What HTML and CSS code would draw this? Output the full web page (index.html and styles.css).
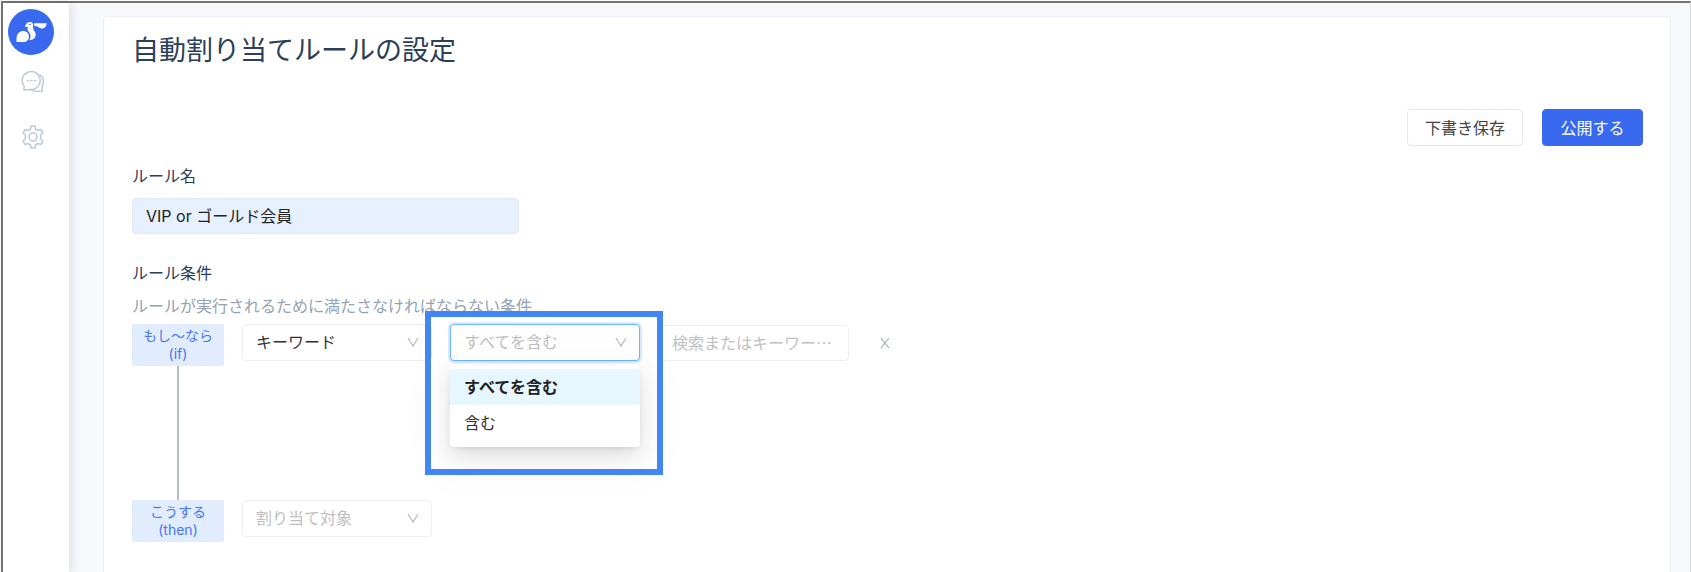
FILE: index.html
```html
<!DOCTYPE html>
<html lang="ja">
<head>
<meta charset="utf-8">
<title>自動割り当てルールの設定</title>
<link rel="stylesheet" href="styles.css">
</head>
<body>
<div class="app">
  <nav class="sidebar">
    <a class="logo" href="#" aria-label="ホーム">
      <svg viewBox="0 0 46 46"><circle cx="23" cy="23" r="23" fill="#3969ef"/><path d="M8.500 33V29.500c0-4.500 3-7.500 6.500-7.500s6 2.500 6 5.500c0 3.500-2.500 5.500-6 5.500Z" fill="#fff"/><path d="M17 18c.5-3.500 2.500-5 5-5s3.500 1.800 3.200 4c-.4 3 .3 4 1.500 5.500 1.500 2 1.300 4.500 0 6.300-1.200 1.700-3 2.300-5.200 2.200 1.500-2.500 1.500-5.500-.3-7.500-1.400-1.500-2.200-3-1.200-5.500Z" fill="#fff"/><path d="M26 14.200h12.700c-.2 3-2.200 5.500-5.200 5.300-2.500-.3-3.500-2.500-7.500-3Z" fill="#fff"/><circle cx="22" cy="15.500" r=".8" fill="#3969ef"/></svg>
    </a>
    <div class="nav-links">
      <a class="nav-link" href="#" aria-label="チャット">
        <svg viewBox="0 0 24 24"><path d="M3 20v-4a9 9 0 1 1 6 3.500L3 20Z"/><path d="M19 4.800c2.200 1.500 3.500 3.700 3.500 6.700 0 2-.5 4-1.500 5.500v4.500l-4.500-.3c-2.500.3-4.500 0-6-1.500"/><path d="M6.300 10.500h1.200M9.900 10.500h1.200M13.500 10.500h1.200"/></svg>
      </a>
      <a class="nav-link" href="#" aria-label="設定">
        <svg viewBox="0 0 24 24"><circle cx="12" cy="12" r="4"/><path d="M9.500 4 10 1h4l.5 3 2.500 1.500 3-1 2 3.500-2.300 2v4l2.300 2-2 3.500-3-1-2.500 1.500-.5 3h-4l-.5-3L7 18.500l-3 1L2 16l2.300-2v-4L2 8l2-3.500 3 1Z"/></svg>
      </a>
    </div>
  </nav>
  <main class="content">
    <form class="card">
      <h1 class="title">自動割り当てルールの設定</h1>
      <div class="actions">
        <button class="btn" type="button">下書き保存</button>
        <button class="btn btn-primary" type="button">公開する</button>
      </div>
      <label class="label" for="rule-name">ルール名</label>
      <input class="name-input" id="rule-name" type="text" value="VIP or ゴールド会員">
      <h2 class="label">ルール条件</h2>
      <p class="hint">ルールが実行されるために満たさなければならない条件</p>
      <div class="flow">
        <div class="rail">
          <div class="tag">もし〜なら<br>(if)</div>
          <div class="line"></div>
          <div class="tag">こうする<br>(then)</div>
        </div>
        <div class="rows">
          <div class="row">
            <div class="picker">
              <select class="select" aria-label="条件の種類"><option>キーワード</option></select>
              <svg class="chevron" viewBox="0 0 12 12"><path d="M1 2l5 8 5-8"/></svg>
            </div>
            <div class="picker">
              <select class="select is-empty is-open" aria-label="一致方法"><option>すべてを含む</option><option>含む</option></select>
              <svg class="chevron" viewBox="0 0 12 12"><path d="M1 2l5 8 5-8"/></svg>
              <ul class="menu" role="listbox" aria-label="一致方法の候補">
                <li class="option is-active" role="option" aria-selected="true">すべてを含む</li>
                <li class="option" role="option" aria-selected="false">含む</li>
              </ul>
              <div class="highlight"></div>
            </div>
            <input class="keyword" type="text" aria-label="キーワード" placeholder="検索またはキーワー…">
            <button class="remove" type="button" aria-label="条件を削除"><svg viewBox="0 0 12 12"><path d="M2 1l8 10M10 1 2 11"/></svg></button>
          </div>
          <div class="row">
            <div class="picker">
              <select class="select is-empty" aria-label="割り当て対象"><option>割り当て対象</option></select>
              <svg class="chevron" viewBox="0 0 12 12"><path d="M1 2l5 8 5-8"/></svg>
            </div>
          </div>
        </div>
      </div>
    </form>
  </main>
</div>
</body>
</html>
```
FILE: styles.css
```css
* { box-sizing: border-box; }
body { margin: 0; background: #fff; color: #2b3f58; }
body, button, input, select { font-family: Inter, "Noto Sans CJK JP", sans-serif; font-size: 16px; }
.app { display: flex; min-height: 100vh; border: solid #777271; border-width: 2px 0 0 2px; border-right: 1px solid #d4d5d8; margin: 1px 0 0 1px; background: #f7f9fc; }
.sidebar { display: flex; flex-direction: column; gap: 15px; flex: 0 0 66px; padding: 6px 0 0 5px; background: #fff; box-shadow: 2px 0 10px rgba(40, 50, 80, .14); }
.logo, .logo svg { display: block; width: 46px; height: 46px; }
.nav-links { display: flex; flex-direction: column; gap: 31px; padding-left: 13px; }
.nav-link, .nav-link svg { display: block; width: 24px; height: 24px; }
.nav-link svg { fill: none; stroke: #c0ccd8; stroke-width: 1.6; stroke-linejoin: round; stroke-linecap: round; }
.content { display: flex; flex: 1; padding: 13px 19px 0 34px; }
.card { flex: 1; padding: 12px 27px 28px 28px; background: #fff; border: 1px solid #e9eff5; border-bottom: 0; border-radius: 4px 4px 0 0; }
.title { margin: 0 0 36px; font-size: 27px; line-height: 44px; font-weight: 400; }
.actions { display: flex; justify-content: flex-end; gap: 19px; margin-bottom: 18px; }
.btn { height: 37px; padding: 0 17px 2px; border: 1px solid #e8e8e8; border-radius: 4px; background: #fff; color: #444; }
.btn-primary { min-width: 101px; border-color: #3969ef; background: #3969ef; color: #fff; }
.label { display: block; margin: 0; font-size: 16px; font-weight: 400; line-height: 24px; }
.name-input { display: block; width: 387px; height: 36px; margin: 10px 0 27px; padding: 0 13px 2px; border: 1px solid #e3ebf5; border-radius: 4px; background: #e6f0ff; color: #222; }
.hint { margin: 9px 0 6px; line-height: 24px; color: #94a3b3; }
.flow { display: flex; gap: 18px; }
.rail { display: flex; flex-direction: column; align-items: center; width: 92px; }
.tag { width: 100%; height: 42px; padding-top: 3px; border-radius: 2px; background: #e1edff; color: #4775f2; font-size: 14px; line-height: 18px; text-align: center; }
.line { width: 2px; height: 134px; background: #b0bfc3; }
.rows { display: flex; flex-direction: column; gap: 139px; }
.row { display: flex; align-items: center; gap: 18px; }
.picker { position: relative; width: 190px; }
.select { display: block; width: 100%; height: 37px; padding: 0 32px 2px 13px; appearance: none; border: 1px solid #ecefef; border-radius: 4px; background: #fff; color: #333; }
.is-empty { color: #bfbfbf; }
.is-open { border-color: #69b5ff; box-shadow: 0 0 0 2px #d5e9ff; }
.chevron { position: absolute; top: 12px; right: 13px; width: 12px; height: 12px; fill: none; stroke: #bbb; stroke-width: 1.2; }
.menu { position: absolute; z-index: 2; top: 41px; left: 0; width: 100%; margin: 0; padding: 4px 0 6px; list-style: none; border-radius: 4px; background: #fff; box-shadow: 0 3px 8px -4px rgba(0,0,0,.16), 0 8px 20px rgba(0,0,0,.1), 0 12px 48px 14px rgba(0,0,0,.03); }
.option { padding: 0 14px; line-height: 36px; color: #333; }
.is-active { background: #e6f7ff; color: #222; font-weight: 700; }
.highlight { position: absolute; z-index: 3; top: -13px; left: -25px; width: 238px; height: 164px; border: 6px solid #4285f4; pointer-events: none; }
.keyword { width: 191px; height: 36px; padding: 0 13px 2px; border: 1px solid #ecefef; border-radius: 4px; background: #fff; font-family: "Noto Sans CJK JP", sans-serif; }
.keyword::placeholder { color: #bfbfbf; opacity: 1; }
.remove { display: grid; place-items: center; width: 36px; height: 36px; padding: 0; border: 0; border-radius: 50%; background: #fff; box-shadow: 0 1px 1px rgba(0,0,0,.02); }
.remove svg { width: 12px; height: 12px; fill: none; stroke: #a3afb8; stroke-width: 1.2; }
```
